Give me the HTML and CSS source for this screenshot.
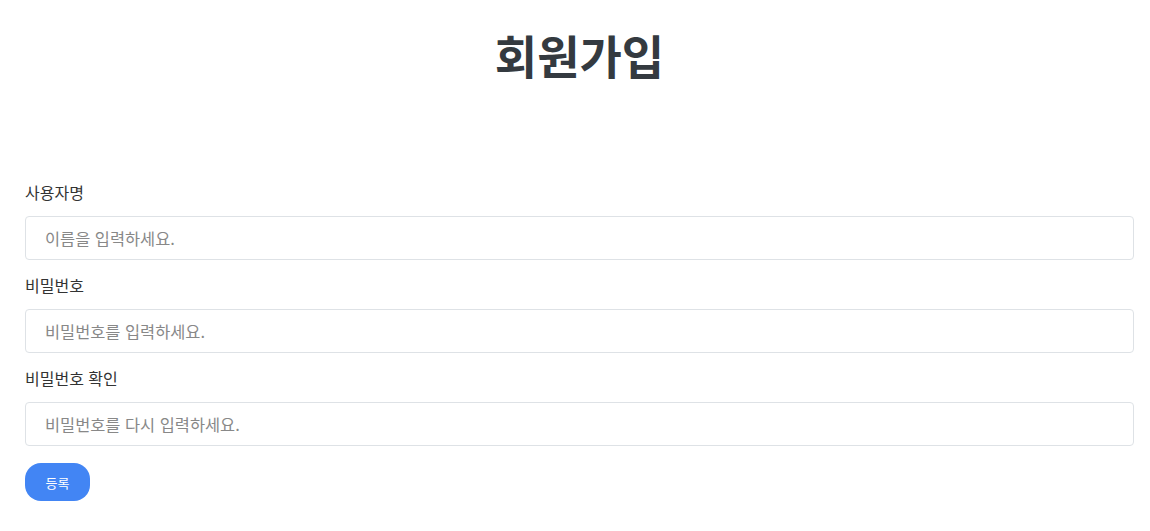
FILE: index.html
```html
<!DOCTYPE html>
<html lang="ko">
<head>
<meta charset="utf-8">
<title>회원가입</title>
<link rel="stylesheet" href="styles.css">
</head>
<body>
<div class="page">
  <h1 class="title">회원가입</h1>
  <form class="form">
    <div class="group">
      <label class="label" for="u">사용자명</label>
      <input class="input" id="u" type="text" placeholder="이름을 입력하세요.">
    </div>
    <div class="group">
      <label class="label" for="p">비밀번호</label>
      <input class="input" id="p" type="password" placeholder="비밀번호를 입력하세요.">
    </div>
    <div class="group">
      <label class="label" for="c">비밀번호 확인</label>
      <input class="input" id="c" type="password" placeholder="비밀번호를 다시 입력하세요.">
    </div>
    <button class="btn" type="button">등록</button>
  </form>
</div>
</body>
</html>
```
FILE: styles.css
```css
* { box-sizing: border-box; }
html, body { margin: 0; padding: 0; background: #fff; }
body {
  font-family: "Noto Sans CJK KR", "Noto Sans", sans-serif;
  color: #333;
}
.page {
  padding: 0 16px 0 25px;
}
.title {
  margin: 0;
  padding-top: 22px;
  text-align: center;
  font-size: 46px;
  font-weight: 700;
  line-height: 64px;
  color: #343a40;
}
.form {
  margin-top: 94px;
  display: flex;
  flex-direction: column;
}
.group {
  display: flex;
  flex-direction: column;
  margin-bottom: 13px;
}
.label {
  font-size: 16px;
  line-height: 24px;
  margin-bottom: 12px;
  color: #333;
}
.input {
  height: 44px;
  width: 100%;
  border: 1px solid #dee2e6;
  border-radius: 4px;
  padding: 0 19px;
  font-family: inherit;
  font-size: 16.4px;
  color: #333;
  outline: none;
}
.input::placeholder { color: #888; }
.btn {
  align-self: flex-start;
  margin-top: 4px;
  width: 65px;
  height: 38px;
  border: none;
  border-radius: 16px;
  background: #4285f4;
  color: #fff;
  font-family: inherit;
  font-size: 13px;
  cursor: pointer;
}
```
